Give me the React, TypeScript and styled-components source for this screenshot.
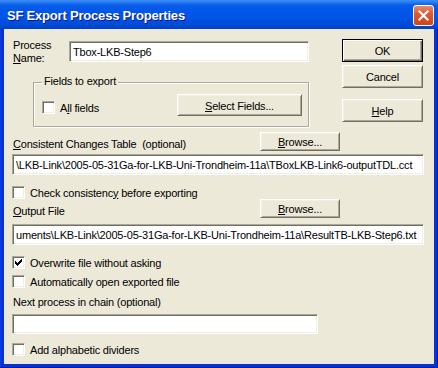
import React from "react";
import styled, { createGlobalStyle } from "styled-components";

const Global = createGlobalStyle`
  html, body { margin: 0; padding: 0; background: #ece9d8; }
  body {
    font-family: "Liberation Sans", Arial, sans-serif;
    font-size: 11px;
    letter-spacing: -0.2px;
    color: #000;
  }
  * { box-sizing: border-box; }
`;

const Window = styled.div`
  width: 438px;
  height: 368px;
  display: flex;
  flex-direction: column;
  background: #0831d9;
  box-shadow: inset -1px -1px 0 #001c9c, inset 1px 0 0 #0a3ee0;
`;

const TitleBar = styled.div`
  height: 29px;
  flex: none;
  display: flex;
  align-items: center;
  justify-content: space-between;
  padding: 0 4px 0 7px;
  background: linear-gradient(
    180deg,
    #3d8ef8 0px,
    #2a7ef5 2px,
    #0a5fe8 5px,
    #0058ec 10px,
    #0054e6 18px,
    #004bd8 25px,
    #0040c4 29px
  );
`;

const Title = styled.span`
  color: #fff;
  font-weight: bold;
  font-size: 13px;
  letter-spacing: -0.2px;
  padding-top: 2px;
  text-shadow: 1px 1px 0 #0a1883;
`;

const CloseButton = styled.div`
  width: 21px;
  height: 21px;
  margin-top: 2px;
  border: 1px solid #fff;
  border-radius: 3px;
  background: linear-gradient(180deg, #e98a69 0%, #de5a30 40%, #cf4418 100%);
  display: flex;
  align-items: center;
  justify-content: center;
`;

const Client = styled.div`
  flex: 1;
  margin: 0 4px 4px 4px;
  background: #ece9d8;
  padding: 8px 0 0 8px;
  display: flex;
  flex-direction: column;
`;

const TopSection = styled.div`
  display: flex;
  align-items: flex-start;
`;

const LeftCol = styled.div`
  width: 297px;
  display: flex;
  flex-direction: column;
`;

const NameRow = styled.div`
  display: flex;
  align-items: flex-start;
  height: 28px;
`;

const NameLabel = styled.div`
  width: 57px;
  margin-top: 2px;
  padding-left: 1px;
  line-height: 13px;
`;

const TextBox = styled.div<{ $w: number; $h?: number; $top?: number }>`
  width: ${(p) => p.$w}px;
  height: ${(p) => p.$h ?? 21}px;
  margin-top: ${(p) => p.$top ?? 0}px;
  flex: none;
  background: #fff;
  border: 1px solid;
  border-color: #aca899 #fff #fff #aca899;
  box-shadow: inset 1px 1px 0 #716f64, inset -1px -1px 0 #f1efe2;
  padding: 0 0 0 3px;
  display: flex;
  align-items: center;
  white-space: nowrap;
  overflow: hidden;
`;

const GroupBox = styled.div`
  position: relative;
  margin: 17px 0 0 21px;
  width: 276px;
  border: 1px solid #aca899;
  box-shadow: inset 1px 1px 0 #fff, 1px 1px 0 #fff;
  padding: 11px 6px 10px 8px;
  display: flex;
  align-items: flex-start;
  justify-content: space-between;
`;

const GroupLabel = styled.span`
  position: absolute;
  top: -8px;
  left: 8px;
  padding: 0 2px;
  background: #ece9d8;
  line-height: 13px;
`;

const ButtonCol = styled.div`
  margin-left: 33px;
  display: flex;
  flex-direction: column;
`;

const PushButton = styled.div<{ $w: number; $h: number; $top?: number; $default?: boolean }>`
  width: ${(p) => p.$w}px;
  height: ${(p) => p.$h}px;
  margin-top: ${(p) => p.$top ?? 0}px;
  flex: none;
  background: #ece9d8;
  display: flex;
  align-items: center;
  justify-content: center;
  padding-top: 1px;
  border: 1px solid;
  border-color: ${(p) => (p.$default ? "#000" : "#fff #716f64 #716f64 #fff")};
  box-shadow: ${(p) =>
    p.$default
      ? "inset 1px 1px 0 #fff, inset -1px -1px 0 #716f64, inset -2px -2px 0 #aca899"
      : "inset 1px 1px 0 #f1efe2, inset -1px -1px 0 #aca899"};
`;

const CheckRow = styled.div<{ $top?: number }>`
  display: flex;
  align-items: center;
  gap: 5px;
  height: 13px;
  margin-top: ${(p) => p.$top ?? 0}px;
`;

const CheckBox = styled.div`
  width: 13px;
  height: 13px;
  flex: none;
  background: #fff;
  border: 1px solid;
  border-color: #aca899 #fff #fff #aca899;
  box-shadow: inset 1px 1px 0 #716f64, inset -1px -1px 0 #f1efe2;
  display: flex;
  align-items: center;
  justify-content: center;
`;

const LabelRow = styled.div<{ $top: number }>`
  display: grid;
  grid-template-columns: 248px 80px;
  align-items: end;
  height: 19px;
  margin-top: ${(p) => p.$top}px;
`;

const Label = styled.span<{ $top?: number }>`
  display: block;
  line-height: 13px;
  padding-left: 1px;
  margin-top: ${(p) => p.$top ?? 0}px;
`;

const Key = styled.span`
  text-decoration: underline;
  text-underline-offset: 1px;
`;

function Check({ checked, children, top }: { checked?: boolean; children: React.ReactNode; top?: number }) {
  return (
    <CheckRow $top={top}>
      <CheckBox>
        {checked && (
          <svg width="9" height="9" viewBox="0 0 9 9">
            <path d="M1.5 3.5 L3.5 5.5 L7.5 1.5 M1.5 4.5 L3.5 6.5 L7.5 2.5 M1.5 5.5 L3.5 7.5 L7.5 3.5" stroke="#000" strokeWidth="1" fill="none" shapeRendering="crispEdges" />
          </svg>
        )}
      </CheckBox>
      <span>{children}</span>
    </CheckRow>
  );
}

export default function App() {
  return (
    <>
      <Global />
      <Window>
        <TitleBar>
          <Title>SF Export Process Properties</Title>
          <CloseButton>
            <svg width="13" height="13" viewBox="0 0 13 13">
              <path d="M2.5 2.5 L10.5 10.5 M10.5 2.5 L2.5 10.5" stroke="#fff" strokeWidth="2.2" strokeLinecap="square" />
            </svg>
          </CloseButton>
        </TitleBar>
        <Client>
          <TopSection>
            <LeftCol>
              <NameRow>
                <NameLabel>
                  Process
                  <br />
                  <Key>N</Key>ame:
                </NameLabel>
                <TextBox $w={240} $top={4}>Tbox-LKB-Step6</TextBox>
              </NameRow>
              <GroupBox>
                <GroupLabel>Fields to export</GroupLabel>
                <Check top={7}>
                  A<Key>l</Key>l fields
                </Check>
                <PushButton $w={125} $h={22}>
                  <Key>S</Key>elect Fields...
                </PushButton>
              </GroupBox>
            </LeftCol>
            <ButtonCol>
              <PushButton $w={81} $h={23} $top={2} $default>
                OK
              </PushButton>
              <PushButton $w={81} $h={23} $top={3}>
                Cancel
              </PushButton>
              <PushButton $w={81} $h={23} $top={11}>
                <Key>H</Key>elp
              </PushButton>
            </ButtonCol>
          </TopSection>

          <LabelRow $top={5}>
            <Label>
              <Key>C</Key>onsistent Changes Table&nbsp; (optional)
            </Label>
            <PushButton $w={80} $h={19}>
              <Key>B</Key>rowse...
            </PushButton>
          </LabelRow>
          <TextBox $w={412} $top={3}>
            \LKB-Link\2005-05-31Ga-for-LKB-Uni-Trondheim-11a\TBoxLKB-Link6-outputTDL.cct
          </TextBox>
          <Check top={11}>
            Check consistenc<Key>y</Key> before exporting
          </Check>

          <LabelRow $top={0}>
            <Label>
              <Key>O</Key>utput File
            </Label>
            <PushButton $w={80} $h={19}>
              <Key>B</Key>rowse...
            </PushButton>
          </LabelRow>
          <TextBox $w={412} $top={6}>
            uments\LKB-Link\2005-05-31Ga-for-LKB-Uni-Trondheim-11a\ResultTB-LKB-Step6.txt
          </TextBox>
          <Check top={11} checked>
            Overwrite file without asking
          </Check>
          <Check top={6}>Automatically open exported file</Check>

          <Label $top={8}>Next process in chain (optional)</Label>
          <TextBox $w={306} $h={20} $top={5} />
          <Check top={9}>Add alphabetic dividers</Check>
        </Client>
      </Window>
    </>
  );
}
